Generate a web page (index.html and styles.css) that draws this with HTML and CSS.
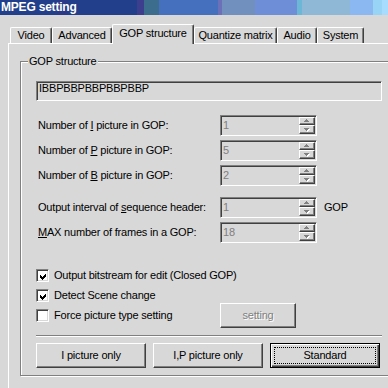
FILE: index.html
```html
<!DOCTYPE html>
<html>
<head>
<meta charset="utf-8">
<title>MPEG setting</title>
<link rel="stylesheet" href="styles.css">
</head>
<body>
<div class="window">
  <div class="titlebar">MPEG setting</div>
  <div class="tabs">
    <div class="tab w-video">Video</div>
    <div class="tab w-adv">Advanced</div>
    <div class="tab active w-gop">GOP structure</div>
    <div class="tab w-quant">Quantize matrix</div>
    <div class="tab w-audio">Audio</div>
    <div class="tab w-sys">System</div>
  </div>
  <div class="panel">
    <div class="group">
      <div class="legend">GOP structure</div>
      <div class="textfield sunken">IBBPBBPBBPBBPBBP</div>

      <div class="rows">
        <div class="row">
          <span class="lbl">Number of <u>I</u> picture in GOP:</span>
          <div class="spin sunken"><span class="val">1</span><div class="spinbtns"><div class="sb up"><svg width="6" height="4" shape-rendering="crispEdges"><rect x="3" y="1" width="1" height="1" fill="#fff"/><rect x="2" y="2" width="3" height="1" fill="#fff"/><rect x="2" y="0" width="1" height="1" fill="#808080"/><rect x="1" y="1" width="3" height="1" fill="#808080"/><rect x="0" y="2" width="5" height="1" fill="#808080"/></svg></div><div class="sb down"><svg width="6" height="4" shape-rendering="crispEdges"><rect x="1" y="1" width="5" height="1" fill="#fff"/><rect x="2" y="2" width="3" height="1" fill="#fff"/><rect x="3" y="3" width="1" height="1" fill="#fff"/><rect x="0" y="0" width="5" height="1" fill="#808080"/><rect x="1" y="1" width="3" height="1" fill="#808080"/><rect x="2" y="2" width="1" height="1" fill="#808080"/></svg></div></div></div>
        </div>
        <div class="row">
          <span class="lbl">Number of <u>P</u> picture in GOP:</span>
          <div class="spin sunken"><span class="val">5</span><div class="spinbtns"><div class="sb up"><svg width="6" height="4" shape-rendering="crispEdges"><rect x="3" y="1" width="1" height="1" fill="#fff"/><rect x="2" y="2" width="3" height="1" fill="#fff"/><rect x="2" y="0" width="1" height="1" fill="#808080"/><rect x="1" y="1" width="3" height="1" fill="#808080"/><rect x="0" y="2" width="5" height="1" fill="#808080"/></svg></div><div class="sb down"><svg width="6" height="4" shape-rendering="crispEdges"><rect x="1" y="1" width="5" height="1" fill="#fff"/><rect x="2" y="2" width="3" height="1" fill="#fff"/><rect x="3" y="3" width="1" height="1" fill="#fff"/><rect x="0" y="0" width="5" height="1" fill="#808080"/><rect x="1" y="1" width="3" height="1" fill="#808080"/><rect x="2" y="2" width="1" height="1" fill="#808080"/></svg></div></div></div>
        </div>
        <div class="row">
          <span class="lbl">Number of <u>B</u> picture in GOP:</span>
          <div class="spin sunken"><span class="val">2</span><div class="spinbtns"><div class="sb up"><svg width="6" height="4" shape-rendering="crispEdges"><rect x="3" y="1" width="1" height="1" fill="#fff"/><rect x="2" y="2" width="3" height="1" fill="#fff"/><rect x="2" y="0" width="1" height="1" fill="#808080"/><rect x="1" y="1" width="3" height="1" fill="#808080"/><rect x="0" y="2" width="5" height="1" fill="#808080"/></svg></div><div class="sb down"><svg width="6" height="4" shape-rendering="crispEdges"><rect x="1" y="1" width="5" height="1" fill="#fff"/><rect x="2" y="2" width="3" height="1" fill="#fff"/><rect x="3" y="3" width="1" height="1" fill="#fff"/><rect x="0" y="0" width="5" height="1" fill="#808080"/><rect x="1" y="1" width="3" height="1" fill="#808080"/><rect x="2" y="2" width="1" height="1" fill="#808080"/></svg></div></div></div>
        </div>
      </div>

      <div class="rows second">
        <div class="row">
          <span class="lbl">Output interval of <u>s</u>equence header:</span>
          <div class="spin sunken"><span class="val">1</span><div class="spinbtns"><div class="sb up"><svg width="6" height="4" shape-rendering="crispEdges"><rect x="3" y="1" width="1" height="1" fill="#fff"/><rect x="2" y="2" width="3" height="1" fill="#fff"/><rect x="2" y="0" width="1" height="1" fill="#808080"/><rect x="1" y="1" width="3" height="1" fill="#808080"/><rect x="0" y="2" width="5" height="1" fill="#808080"/></svg></div><div class="sb down"><svg width="6" height="4" shape-rendering="crispEdges"><rect x="1" y="1" width="5" height="1" fill="#fff"/><rect x="2" y="2" width="3" height="1" fill="#fff"/><rect x="3" y="3" width="1" height="1" fill="#fff"/><rect x="0" y="0" width="5" height="1" fill="#808080"/><rect x="1" y="1" width="3" height="1" fill="#808080"/><rect x="2" y="2" width="1" height="1" fill="#808080"/></svg></div></div></div>
          <span class="unit">GOP</span>
        </div>
        <div class="row">
          <span class="lbl"><u>M</u>AX number of frames in a GOP:</span>
          <div class="spin sunken"><span class="val">18</span><div class="spinbtns"><div class="sb up"><svg width="6" height="4" shape-rendering="crispEdges"><rect x="3" y="1" width="1" height="1" fill="#fff"/><rect x="2" y="2" width="3" height="1" fill="#fff"/><rect x="2" y="0" width="1" height="1" fill="#808080"/><rect x="1" y="1" width="3" height="1" fill="#808080"/><rect x="0" y="2" width="5" height="1" fill="#808080"/></svg></div><div class="sb down"><svg width="6" height="4" shape-rendering="crispEdges"><rect x="1" y="1" width="5" height="1" fill="#fff"/><rect x="2" y="2" width="3" height="1" fill="#fff"/><rect x="3" y="3" width="1" height="1" fill="#fff"/><rect x="0" y="0" width="5" height="1" fill="#808080"/><rect x="1" y="1" width="3" height="1" fill="#808080"/><rect x="2" y="2" width="1" height="1" fill="#808080"/></svg></div></div></div>
        </div>
      </div>

      <div class="checks">
        <div class="chk">
          <span class="cbox sunken"><svg width="9" height="9" viewBox="0 0 9 9" shape-rendering="crispEdges"><polygon points="1,3 3,5 7,1 7,4 3,8 1,6" fill="#000"/></svg></span>
          <span>Output bitstream for edit (Closed GOP)</span>
        </div>
        <div class="chk c2">
          <span class="cbox sunken"><svg width="9" height="9" viewBox="0 0 9 9" shape-rendering="crispEdges"><polygon points="1,3 3,5 7,1 7,4 3,8 1,6" fill="#000"/></svg></span>
          <span>Detect Scene change</span>
        </div>
        <div class="chkrow">
          <div class="chk wide">
            <span class="cbox sunken"></span>
            <span>Force picture type setting</span>
          </div>
          <button class="btn raised disabled-btn">setting</button>
        </div>
      </div>

      <div class="separator"></div>

      <div class="buttons">
        <button class="btn raised wbtn">I picture only</button>
        <button class="btn raised wbtn">I,P picture only</button>
        <button class="btn default wbtn">Standard</button>
      </div>
    </div>
  </div>
</div>
</body>
</html>
```

FILE: styles.css
```css
* { box-sizing: border-box; }

html, body {
  margin: 0;
  padding: 0;
  overflow: hidden;
  background: #d8d8d8;
}

body {
  font-family: "Liberation Sans", Arial, sans-serif;
  font-size: 11px;
  line-height: 13px;
  letter-spacing: -0.2px;
  color: #000;
}

.window {
  width: 388px;
  height: 388px;
  overflow: hidden;
  background: #d8d8d8;
}

.titlebar {
  height: 15px;
  padding-left: 1px;
  color: #fff;
  font-weight: bold;
  font-size: 12px;
  line-height: 15px;
  letter-spacing: -0.2px;
  background: linear-gradient(to right,
    #223f8b 0 57px, #2b3a88 57px 68px, #223f8b 68px 137px,
    #3e3e8f 137px 144px, #3d6d8d 144px 159px, #4570bd 159px 218px,
    #6b70b8 218px 222px, #7190bd 222px 255px, #6e8ed8 255px 297px,
    #6cb6d6 297px 302px, #8fb8d6 302px 350px, #8cb8f2 350px 373px,
    #98d4f5 373px 382px, #a8dcff 382px 388px);
}

/* tabs */
.tabs {
  display: flex;
  align-items: flex-end;
  height: 19px;
  margin-top: 9px;
  padding-left: 10px;
}

.tab {
  height: 16px;
  padding-top: 1px;
  text-align: center;
  white-space: nowrap;
  border-top: 1px solid #fff;
  border-left: 1px solid #fff;
  border-right: 1px solid #404040;
  border-radius: 2px 2px 0 0;
  box-shadow: inset -1px 0 0 #808080;
  background: #d8d8d8;
}

.tab.active {
  height: 20px;
  margin-bottom: -1px;
  padding-top: 2px;
  position: relative;
  z-index: 1;
}

.w-video { width: 42px; }
.w-adv { width: 60px; }
.w-gop { width: 82px; }
.w-quant { width: 83px; }
.w-audio { width: 40px; }
.w-sys { width: 47px; }

/* panel */
.panel {
  margin-left: 8px;
  width: 600px;
  min-height: 400px;
  border-top: 1px solid #fff;
  border-left: 1px solid #fff;
  padding: 17px 0 0 11px;
}

.group {
  position: relative;
  width: 520px;
  border: 1px solid #808080;
  box-shadow: inset 1px 1px 0 #fff, 1px 1px 0 #fff;
  padding: 19px 0 7px 15px;
}

.legend {
  position: absolute;
  top: -7px;
  left: 7px;
  padding: 0 1px;
  background: #d8d8d8;
}

.sunken {
  border-top: 1px solid #808080;
  border-left: 1px solid #808080;
  border-right: 1px solid #fff;
  border-bottom: 1px solid #fff;
  box-shadow: inset 1px 1px 0 #404040, inset -1px -1px 0 #d8d8d8;
}

.textfield {
  width: 346px;
  height: 20px;
  padding: 0 1px 0 2px;
  line-height: 13px;
}

/* spin rows */
.rows {
  display: flex;
  flex-direction: column;
  gap: 4px;
  margin-top: 14px;
}

.rows.second { margin-top: 11px; }

.row {
  display: flex;
  align-items: center;
  height: 21px;
}

.lbl {
  width: 184px;
  padding-left: 2px;
  white-space: nowrap;
}

.spin {
  display: flex;
  width: 97px;
  height: 21px;
}

.val {
  flex: 1;
  padding-left: 2px;
  line-height: 19px;
  color: #808080;
}

.spinbtns {
  display: flex;
  flex-direction: column;
  width: 16px;
  margin: 1px 1px 1px 0;
}

.sb {
  display: flex;
  align-items: center;
  justify-content: center;
  background: #d8d8d8;
  border-top: 1px solid #fff;
  border-left: 1px solid #fff;
  border-right: 1px solid #404040;
  border-bottom: 1px solid #404040;
  box-shadow: inset -1px -1px 0 #808080;
}

.sb.up { height: 8px; }
.sb.down { height: 9px; }
.sb svg { display: block; }

.unit { margin-left: 7px; }

/* checkboxes */
.checks { margin-top: 23px; }

.chk {
  display: flex;
  align-items: center;
  height: 19px;
  white-space: nowrap;
}

.chk.c2 { margin-top: 1px; }

.cbox {
  width: 13px;
  height: 13px;
  margin-right: 5px;
  background: #fff;
  display: flex;
  align-items: center;
  justify-content: center;
  padding: 1px 0 0 1px;
}

.cbox svg { display: block; }

.chkrow {
  display: flex;
  align-items: center;
  height: 25px;
  margin-top: -2px;
}

.chk.wide { width: 184px; }

/* buttons */
.btn {
  font-family: inherit;
  font-size: 11px;
  line-height: 13px;
  letter-spacing: -0.2px;
  color: #000;
  padding: 0;
  margin: 0;
  height: 25px;
  background: #d8d8d8;
  border-radius: 0;
}

.raised {
  border-top: 1px solid #fff;
  border-left: 1px solid #fff;
  border-right: 1px solid #404040;
  border-bottom: 1px solid #404040;
  box-shadow: inset -1px -1px 0 #808080;
}

.disabled-btn {
  width: 76px;
  color: #808080;
  text-shadow: 1px 1px 0 #fff;
}

.separator {
  width: 346px;
  height: 2px;
  margin-top: 7px;
  border-top: 1px solid #808080;
  border-bottom: 1px solid #fff;
}

.buttons {
  display: flex;
  gap: 7px;
  margin-top: 6px;
}

.wbtn { width: 110px; }

.default {
  border: 1px solid #000;
  box-shadow: inset 1px 1px 0 #fff, inset -1px -1px 0 #404040, inset -2px -2px 0 #808080;
  outline: 1px dotted #000;
  outline-offset: -5px;
}
```
